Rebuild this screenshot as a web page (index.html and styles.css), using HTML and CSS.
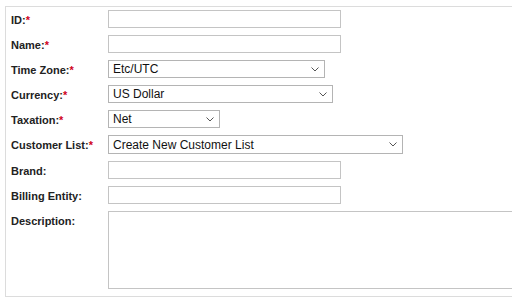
FILE: index.html
```html
<!DOCTYPE html>
<html lang="en">
<head>
    <meta charset="UTF-8">
    <title>Customer</title>
    <link rel="stylesheet" href="styles.css">
</head>
<body>
    <form class="panel">
        <label class="lbl">ID:<span class="req">*</span></label>
        <div><input class="field w-std" type="text"></div>

        <label class="lbl">Name:<span class="req">*</span></label>
        <div><input class="field w-std" type="text"></div>

        <label class="lbl">Time Zone:<span class="req">*</span></label>
        <div class="sel w-tz">
            <select class="field"><option>Etc/UTC</option></select>
            <svg class="chev" width="8" height="5" viewBox="0 0 8 5"><path d="M0.5 0.5 L4 4 L7.5 0.5" fill="none" stroke="#555" stroke-width="1"/></svg>
        </div>

        <label class="lbl">Currency:<span class="req">*</span></label>
        <div class="sel w-cur">
            <select class="field"><option>US Dollar</option></select>
            <svg class="chev" width="8" height="5" viewBox="0 0 8 5"><path d="M0.5 0.5 L4 4 L7.5 0.5" fill="none" stroke="#555" stroke-width="1"/></svg>
        </div>

        <label class="lbl">Taxation:<span class="req">*</span></label>
        <div class="sel w-tax">
            <select class="field"><option>Net</option></select>
            <svg class="chev" width="8" height="5" viewBox="0 0 8 5"><path d="M0.5 0.5 L4 4 L7.5 0.5" fill="none" stroke="#555" stroke-width="1"/></svg>
        </div>

        <label class="lbl">Customer List:<span class="req">*</span></label>
        <div class="sel w-list">
            <select class="field"><option>Create New Customer List</option></select>
            <svg class="chev" width="8" height="5" viewBox="0 0 8 5"><path d="M0.5 0.5 L4 4 L7.5 0.5" fill="none" stroke="#555" stroke-width="1"/></svg>
        </div>

        <label class="lbl">Brand:</label>
        <div><input class="field w-std" type="text"></div>

        <label class="lbl">Billing Entity:</label>
        <div><input class="field w-std" type="text"></div>

        <label class="lbl">Description:</label>
        <div class="area-wrap"><textarea class="field area"></textarea></div>
    </form>
</body>
</html>
```

FILE: styles.css
```css
body {
    margin: 0;
    overflow: hidden;
    font-family: "Liberation Sans", Arial, sans-serif;
    color: #222;
}
.panel {
    margin: 6px 0 0 5px;
    border: 1px solid #dcdcdc;
    border-right: none;
    padding: 3px 0 7px 5px;
    display: grid;
    grid-template-columns: 97px minmax(0, 1fr);
    row-gap: 7px;
    overflow: hidden;
}
.lbl {
    font-size: 11px;
    font-weight: bold;
    padding-top: 4px;
    line-height: 13px;
}
.req {
    color: #d0021b;
}
.field {
    display: block;
    box-sizing: border-box;
    height: 18px;
    margin: 0;
    padding: 0 0 0 4px;
    border: 1px solid #c4c4c4;
    border-radius: 0;
    background: #fff;
    font-family: "Liberation Sans", Arial, sans-serif;
    font-size: 12px;
    color: #111;
    outline: none;
}
.w-std {
    width: 233px;
}
.sel {
    position: relative;
}
.sel select {
    width: 100%;
    appearance: none;
    -webkit-appearance: none;
    border-color: #b4b4b4;
}
.chev {
    position: absolute;
    right: 6px;
    top: 7px;
}
.w-tz {
    width: 217px;
}
.w-cur {
    width: 225px;
}
.w-tax {
    width: 112px;
}
.w-list {
    width: 295px;
    height: 19px;
}
.w-list select {
    height: 19px;
}
.area-wrap {
    overflow: hidden;
}
.area {
    width: 480px;
    height: 78px;
    resize: none;
    border-right: none;
}
```
